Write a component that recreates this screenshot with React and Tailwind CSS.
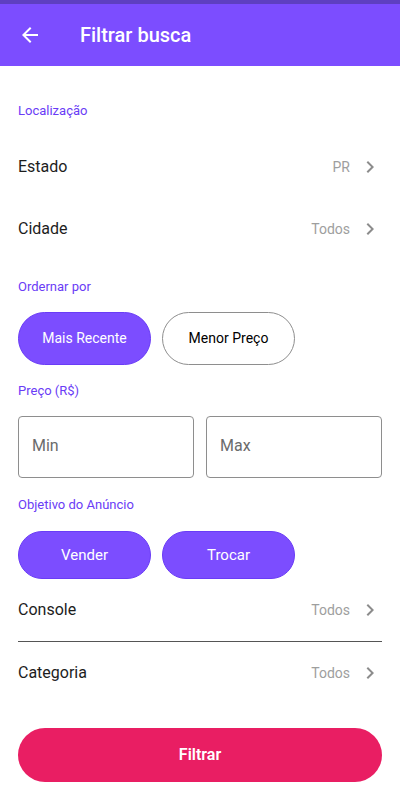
import { useState } from "react"

function Chevron() {
    return (
        <svg width="24" height="24" viewBox="0 0 24 24" className="shrink-0">
            <path d="M8.59 16.59 13.17 12 8.59 7.41 10 6l6 6-6 6z" fill="#8c8c8c" />
        </svg>
    )
}

function Label({ children, className = "" }) {
    return (
        <div className={"h-[20px] flex items-center text-[13px] text-[#6a3cf6] " + className}>{children}</div>
    )
}

function Row({ title, value, className = "h-[62px]" }) {
    return (
        <div className={"flex items-center justify-between " + className}>
            <span className="text-[16px] text-[#1d1d1d]">{title}</span>
            <div className="flex items-center gap-2">
                <span className="text-[14px] text-[#9e9e9e]">{value}</span>
                <Chevron />
            </div>
        </div>
    )
}

export default function App() {
    const [order, setOrder] = useState("recent")

    return (
        <div className="w-[400px] h-[800px] bg-white overflow-hidden" style={{ fontFamily: "Roboto, 'Noto Sans', sans-serif" }}>
            <div className="h-[4px] bg-[#5e3fc1]" />
            <div className="h-[62px] bg-[#7c4dff] flex items-center px-[18px]">
                <svg width="24" height="24" viewBox="0 0 24 24">
                    <path d="M20 11H7.83l5.59-5.59L12 4l-8 8 8 8 1.41-1.41L7.83 13H20v-2z" fill="#ffffff" />
                </svg>
                <h1 className="ml-[38px] text-[20px] font-medium text-white">Filtrar busca</h1>
            </div>

            <div className="px-[18px]">
                <Label className="mt-[35px]">Localização</Label>
                <div className="mt-[15px]">
                    <Row title="Estado" value="PR" />
                    <Row title="Cidade" value="Todos" />
                </div>

                <Label className="mt-[17px]">Ordernar por</Label>
                <div className="mt-[15px] flex gap-[11px]">
                    <button
                        onClick={() => setOrder("recent")}
                        className={"w-[133px] h-[53px] rounded-full text-[14px] " + (order === "recent" ? "bg-[#7c4dff] text-white border border-[#6a3cf6]" : "bg-white text-black border border-[#8e8e8e]")}
                    >
                        Mais Recente
                    </button>
                    <button
                        onClick={() => setOrder("price")}
                        className={"w-[133px] h-[53px] rounded-full text-[14px] " + (order === "price" ? "bg-[#7c4dff] text-white border border-[#6a3cf6]" : "bg-white text-black border border-[#8e8e8e]")}
                    >
                        Menor Preço
                    </button>
                </div>

                <Label className="mt-[16px]">Preço (R$)</Label>
                <div className="mt-[15px] flex gap-[12px]">
                    <input placeholder="Min" className="w-[176px] h-[62px] border border-[#8e8e8e] rounded-[4px] px-[13px] pb-[3px] text-[16px] placeholder-[#6b6b6b] outline-none" />
                    <input placeholder="Max" className="w-[176px] h-[62px] border border-[#8e8e8e] rounded-[4px] px-[13px] pb-[3px] text-[16px] placeholder-[#6b6b6b] outline-none" />
                </div>

                <Label className="mt-[17px]">Objetivo do Anúncio</Label>
                <div className="mt-[16px] flex gap-[11px]">
                    <button className="w-[133px] h-[48px] rounded-full bg-[#7c4dff] border border-[#6a3cf6] text-white text-[15px]">Vender</button>
                    <button className="w-[133px] h-[48px] rounded-full bg-[#7c4dff] border border-[#6a3cf6] text-white text-[15px]">Trocar</button>
                </div>

                <Row title="Console" value="Todos" />
                <div className="h-px bg-[#555555]" />
                <Row title="Categoria" value="Todos" />

                <button className="mt-[24px] w-full h-[54px] rounded-full bg-[#e91e63] text-white text-[16px] font-semibold">
                    Filtrar
                </button>
            </div>
        </div>
    )
}
